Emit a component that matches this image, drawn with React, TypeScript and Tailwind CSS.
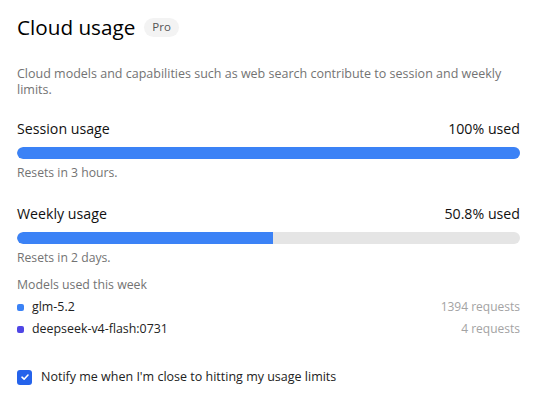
import React from "react";

function Bar({ pct }: { pct: number }) {
  return (
    <div className="h-3 w-full rounded-full bg-[#e5e5e5] overflow-hidden">
      <div className="h-full bg-[#3b82f6] rounded-l-full" style={{ width: `${pct}%` }} />
    </div>
  );
}

export default function App() {
  return (
    <div className="min-h-[396px] bg-white pl-[17px] pr-[38px] pt-[13px] text-[#111] font-['Open_Sans',sans-serif]">
      <div className="flex items-center gap-[9px]">
        <h1 className="text-[20.7px] leading-[28px] font-normal text-black">Cloud usage</h1>
        <span className="rounded-full bg-[#f3f3f3] px-[8px] h-[19px] flex items-center text-[11.5px] text-[#555]">Pro</span>
      </div>
      <p className="mt-[25px] text-[12.5px] leading-[16px] text-[#737373]">
        Cloud models and capabilities such as web search contribute to session and weekly limits.
      </p>

      <div className="mt-[21px] flex items-center justify-between text-[14.2px] leading-[20px]">
        <span>Session usage</span>
        <span>100% used</span>
      </div>
      <div className="mt-[8px]">
        <Bar pct={100} />
      </div>
      <div className="mt-[6px] text-[12.2px] leading-[16px] text-[#737373]">Resets in 3 hours.</div>

      <div className="mt-[23px] flex items-center justify-between text-[14.2px] leading-[20px]">
        <span>Weekly usage</span>
        <span>50.8% used</span>
      </div>
      <div className="mt-[8px]">
        <Bar pct={50.8} />
      </div>
      <div className="mt-[6px] text-[12.2px] leading-[16px] text-[#737373]">Resets in 2 days.</div>

      <div className="mt-[11px] text-[12.3px] leading-[16px] text-[#737373]">Models used this week</div>
      <div className="mt-[6px] flex flex-col gap-[6px] text-[12px] leading-[16px]">
        <div className="flex items-center justify-between">
          <div className="flex items-center gap-[8px]">
            <span className="w-[7px] h-[7px] rounded-[2px] bg-[#3b82f6]" />
            <span className="text-[#222] text-[12.4px]">glm-5.2</span>
          </div>
          <span className="text-[#a3a3a3]">1394 requests</span>
        </div>
        <div className="flex items-center justify-between">
          <div className="flex items-center gap-[8px]">
            <span className="w-[7px] h-[7px] rounded-[2px] bg-[#4f46e5]" />
            <span className="text-[#222] text-[12.4px]">deepseek-v4-flash:0731</span>
          </div>
          <span className="text-[#a3a3a3]">4 requests</span>
        </div>
      </div>

      <label className="mt-[31px] flex items-center gap-[9px] text-[12.5px] leading-[18px] text-[#222]">
        <span className="w-[15px] h-[15px] rounded-[3px] bg-[#2563eb] flex items-center justify-center">
          <svg width="10" height="10" viewBox="0 0 10 10" fill="none">
            <path d="M2 5.2 L4.1 7.2 L8 3" stroke="white" strokeWidth="1.6" strokeLinecap="round" strokeLinejoin="round" />
          </svg>
        </span>
        <span>Notify me when I'm close to hitting my usage limits</span>
      </label>
    </div>
  );
}
